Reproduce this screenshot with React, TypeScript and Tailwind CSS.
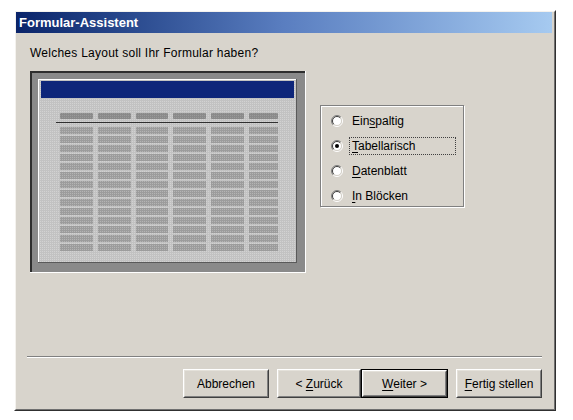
import React from "react";

const COLS: [number, number][] = [
  [30, 33],
  [68, 33],
  [106, 32],
  [143, 33],
  [181, 33],
  [219, 29],
];

function Preview() {
  const rows = Array.from({ length: 14 }, (_, i) => 56 + i * 9);
  return (
    <svg width="276" height="202" viewBox="0 0 276 202" className="block shrink-0">
      <defs>
        <pattern id="dith" width="2" height="2" patternUnits="userSpaceOnUse">
          <rect width="2" height="2" fill="#9c9c9c" />
          <rect width="1" height="1" fill="#b4b4b4" />
        </pattern>
        <pattern id="dithHead" width="2" height="2" patternUnits="userSpaceOnUse">
          <rect width="2" height="2" fill="#8a8a8a" />
          <rect width="1" height="1" fill="#9a9a9a" />
        </pattern>
        <pattern id="dithPanel" width="2" height="2" patternUnits="userSpaceOnUse">
          <rect width="2" height="2" fill="#c2c2c2" />
          <rect width="1" height="1" fill="#d2d2d2" />
        </pattern>
      </defs>
      <rect x="0" y="0" width="276" height="202" fill="#8a8a8a" />
      <rect x="0" y="0" width="276" height="2" fill="#2e2e2e" />
      <rect x="0" y="0" width="2" height="202" fill="#2e2e2e" />
      <rect x="0" y="201" width="276" height="1" fill="#ffffff" />
      <rect x="275" y="0" width="1" height="202" fill="#ffffff" />
      <rect x="8" y="8" width="259" height="184" fill="url(#dithPanel)" />
      <rect x="8" y="8" width="259" height="1" fill="#ffffff" />
      <rect x="8" y="8" width="1" height="184" fill="#ffffff" />
      <rect x="266" y="8" width="1" height="184" fill="#5a5a5a" />
      <rect x="8" y="191" width="259" height="1" fill="#5a5a5a" />
      <rect x="11" y="10" width="253" height="17" fill="#0e267a" />
      {COLS.map(([x, w]) => (
        <rect key={"h" + x} x={x} y={42} width={w} height={6} rx={1} fill="url(#dithHead)" />
      ))}
      <rect x="26" y="51" width="222" height="1" fill="#303030" />
      {rows.map((y) =>
        COLS.map(([x, w]) => (
          <rect key={x + "-" + y} x={x} y={y} width={w} height={7} fill="url(#dith)" />
        ))
      )}
    </svg>
  );
}

function Radio({ checked }: { checked?: boolean }) {
  return (
    <svg width="12" height="12" viewBox="0 0 12 12" className="block shrink-0">
      <circle cx="6" cy="6" r="4.5" fill="#ffffff" />
      <path d="M 2.1 9.9 A 5.5 5.5 0 0 1 9.9 2.1" fill="none" stroke="#808080" strokeWidth="1" />
      <path d="M 9.9 2.1 A 5.5 5.5 0 0 1 2.1 9.9" fill="none" stroke="#ffffff" strokeWidth="1" />
      <path d="M 2.8 9.2 A 4.5 4.5 0 0 1 9.2 2.8" fill="none" stroke="#404040" strokeWidth="1" />
      <path d="M 9.2 2.8 A 4.5 4.5 0 0 1 2.8 9.2" fill="none" stroke="#d4d0c8" strokeWidth="1" />
      {checked && <circle cx="6" cy="6" r="2" fill="#000000" />}
    </svg>
  );
}

function Option({
  before,
  acc,
  after,
  checked,
  focused,
}: {
  before: string;
  acc: string;
  after: string;
  checked?: boolean;
  focused?: boolean;
}) {
  return (
    <div className="flex h-[18px] items-center">
      <Radio checked={checked} />
      <div
        className={
          "ml-[6px] flex h-[18px] w-[107px] items-center border pl-[2px] " +
          (focused ? "border-dotted border-[#404040]" : "border-transparent")
        }
      >
        <span>
          {before}
          <span className="underline underline-offset-2">{acc}</span>
          {after}
        </span>
      </div>
    </div>
  );
}

function Button({
  w,
  def,
  children,
}: {
  w: string;
  def?: boolean;
  children: React.ReactNode;
}) {
  const inner = (
    <div className="h-full w-full border border-t-white border-l-white border-r-[#404040] border-b-[#404040]">
      <div className="flex h-full w-full items-center justify-center border border-t-[#e4e1da] border-l-[#e4e1da] border-r-[#808080] border-b-[#808080]">
        {children}
      </div>
    </div>
  );
  return (
    <div className={"h-[29px] " + w + (def ? " border border-black" : "")}>{inner}</div>
  );
}

export default function App() {
  return (
    <div
      className="h-[420px] w-[573px] bg-white pl-[14px] pt-[10px] text-[12px] leading-[14px] text-black"
      style={{ fontFamily: '"Liberation Sans", Arial, sans-serif' }}
    >
      <div className="h-[401px] w-[542px] border border-t-white border-l-white border-r-[#303030] border-b-[#303030]">
        <div className="flex h-full w-full flex-col border border-t-[#f4f2ee] border-l-[#f4f2ee] border-r-[#707070] border-b-[#707070] bg-[#d8d4cc]">
          <div className="mr-[2px] flex h-[21px] shrink-0 items-center bg-linear-to-r from-[#0a246a] via-[#5a7ec0] to-[#a6caf0] pl-[3px] text-[13px] font-bold text-white">
            Formular-Assistent
          </div>
          <div className="ml-[14px] mt-[13px] h-[14px] tracking-[0.25px]">Welches Layout soll Ihr Formular haben?</div>
          <div className="ml-[14px] mt-[11px] flex items-start">
            <Preview />
            <div className="ml-[14px] mt-[34px] h-[102px] w-[144px] border border-[#808080] pl-[10px] pt-[6px] shadow-[1px_1px_0_#ffffff,inset_1px_1px_0_#ffffff]">
              <div className="flex flex-col gap-[7px]">
                <Option before="Ein" acc="s" after="paltig" />
                <Option before="" acc="T" after="abellarisch" checked focused />
                <Option before="" acc="D" after="atenblatt" />
                <Option before="" acc="I" after="n Blöcken" />
              </div>
            </div>
          </div>
          <div className="flex-1" />
          <div className="ml-[11px] mr-[12px] h-[2px] border-t border-t-[#808080] border-b border-b-white" />
          <div className="mb-[11px] mt-[11px] flex pl-[167px]">
            <Button w="w-[86px]">Abbrechen</Button>
            <div className="w-[8px]" />
            <Button w="w-[84px]">
              <span>
                &lt; <span className="underline underline-offset-2">Z</span>urück
              </span>
            </Button>
            <Button w="w-[87px]" def>
              <span>
                <span className="underline underline-offset-2">W</span>eiter &gt;
              </span>
            </Button>
            <div className="w-[8px]" />
            <Button w="w-[86px]">
              <span>
                <span className="underline underline-offset-2">F</span>ertig stellen
              </span>
            </Button>
          </div>
        </div>
      </div>
    </div>
  );
}
